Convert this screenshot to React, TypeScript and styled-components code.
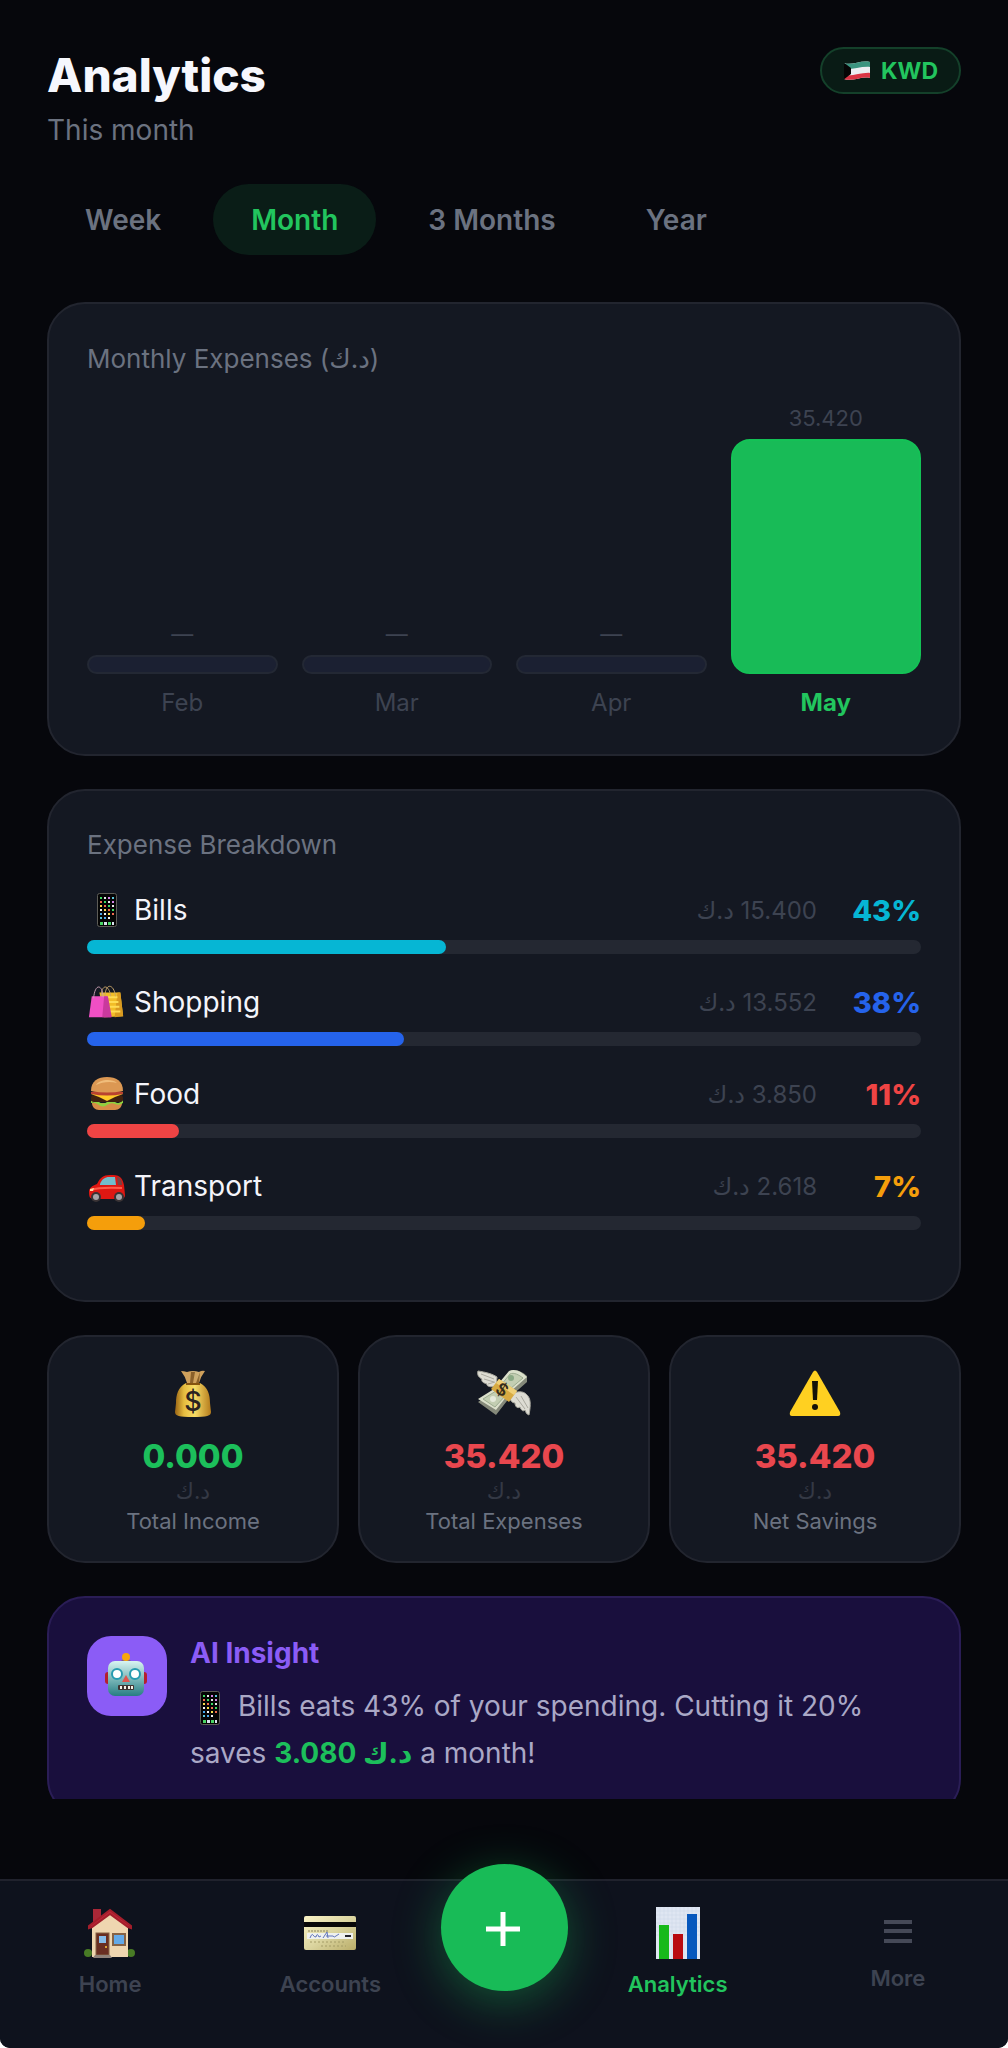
import React, { useState } from 'react'
import styled, { createGlobalStyle } from 'styled-components'

const CURRENCY = 'د.ك'

const periods = ['Week', 'Month', '3 Months', 'Year']

const months = [
  { name: 'Feb', value: 0 },
  { name: 'Mar', value: 0 },
  { name: 'Apr', value: 0 },
  { name: 'May', value: 35.42 },
]

const categories = [
  { name: 'Bills', icon: <PhoneIcon />, amount: '15.400', percent: 43, color: '#06b6d4' },
  { name: 'Shopping', icon: <BagsIcon />, amount: '13.552', percent: 38, color: '#2563eb' },
  { name: 'Food', icon: <BurgerIcon />, amount: '3.850', percent: 11, color: '#ef4444' },
  { name: 'Transport', icon: <CarIcon />, amount: '2.618', percent: 7, color: '#f59e0b' },
]

const totals = [
  { label: 'Total Income', icon: <MoneyBagIcon />, value: '0.000', color: '#1cbf5b' },
  { label: 'Total Expenses', icon: <FlyingMoneyIcon />, value: '35.420', color: '#e9474e' },
  { label: 'Net Savings', icon: <WarningIcon />, value: '35.420', color: '#e9474e' },
]

export default function App(): React.JSX.Element {
  const [period, setPeriod] = useState<string>('Month')
  const max = Math.max(...months.map((m) => m.value))

  return (
    <Screen>
      <GlobalStyle />
      <Content>
        <Header>
          <div>
            <Title>Analytics</Title>
            <Subtitle>This month</Subtitle>
          </div>
          <CurrencyButton type="button">
            <FlagIcon />
            KWD
          </CurrencyButton>
        </Header>

        <Periods>
          {periods.map((p) => (
            <PeriodButton key={p} type="button" $active={p === period} onClick={() => setPeriod(p)}>
              {p}
            </PeriodButton>
          ))}
        </Periods>

        <Stack>
          <Card>
            <ChartTitle>Monthly Expenses ({CURRENCY})</ChartTitle>
            <Chart>
              {months.map((m) => (
                <Column key={m.name}>
                  <ColumnValue>{m.value ? m.value.toFixed(3) : '—'}</ColumnValue>
                  <Bar $active={m.value > 0} style={{ height: Math.round((m.value / max) * 235) }} />
                  <ColumnLabel $active={m.value > 0}>{m.name}</ColumnLabel>
                </Column>
              ))}
            </Chart>
          </Card>

          <Card>
            <CardTitle>Expense Breakdown</CardTitle>
            <CategoryList>
              {categories.map((c) => (
                <li key={c.name}>
                  <CategoryRow>
                    {c.icon}
                    <CategoryName>{c.name}</CategoryName>
                    <Amount>
                      <bdi>{CURRENCY}</bdi> {c.amount}
                    </Amount>
                    <Percent $color={c.color}>{c.percent}%</Percent>
                  </CategoryRow>
                  <Track>
                    <Fill $color={c.color} style={{ width: `${c.percent}%` }} />
                  </Track>
                </li>
              ))}
            </CategoryList>
          </Card>

          <Totals>
            {totals.map((t) => (
              <TotalCard key={t.label}>
                {t.icon}
                <TotalValue $color={t.color}>{t.value}</TotalValue>
                <TotalCurrency>{CURRENCY}</TotalCurrency>
                <TotalLabel>{t.label}</TotalLabel>
              </TotalCard>
            ))}
          </Totals>

          <Insight>
            <InsightBadge>
              <RobotIcon />
            </InsightBadge>
            <div>
              <InsightTitle>AI Insight</InsightTitle>
              <InsightText>
                <InlineIcon>
                  <PhoneIcon />
                </InlineIcon>{' '}
                Bills eats 43% of your spending. Cutting it 20% saves{' '}
                <strong>
                  3.080 <bdi>{CURRENCY}</bdi>
                </strong>{' '}
                a month!
              </InsightText>
            </div>
          </Insight>
        </Stack>
      </Content>

      <Footer>
        <Nav>
          <NavLink href="#home">
            <HouseIcon />
            Home
          </NavLink>
          <NavLink href="#accounts">
            <CreditCardIcon />
            Accounts
          </NavLink>
          <AddButton type="button" aria-label="Add transaction">
            <svg width="36" height="36" viewBox="0 0 36 36" stroke="#fff" strokeWidth="5">
              <path d="M17 2v34M0 19h34" />
            </svg>
          </AddButton>
          <NavLink href="#analytics" $active>
            <ChartIcon />
            Analytics
          </NavLink>
          <NavLink href="#more">
            <MenuIcon />
            More
          </NavLink>
        </Nav>
      </Footer>
    </Screen>
  )
}

function FlagIcon() {
  return (
    <svg width="28" height="20" viewBox="0 0 28 20">
      <defs>
        <clipPath id="flag">
          <path d="M1 2C9 5 17-1 27 1v16c-9-2-17 4-26 1z" />
        </clipPath>
      </defs>
      <g clipPath="url(#flag)">
        <path d="M0 0h28v20H0z" fill="#eceef2" />
        <path d="M0 0h28v6C18 5 10 9 0 8z" fill="#3a947f" />
        <path d="M0 14c10 2 18-3 28-2v8H0z" fill="#dc3545" />
        <path d="M0 1l8 6v6l-8 6z" fill="#050505" />
      </g>
    </svg>
  )
}

const appColors = ['#3ddc62', '#f4f4f4', '#d583e8', '#f26d50', '#49a8ee', '#e8e8e8', '#f7df4a', '#5cc9de']

function PhoneIcon() {
  return (
    <svg width="40" height="36" viewBox="0 0 40 36">
      <rect x="10.5" y="1.5" width="19" height="33" rx="2" fill="#050505" stroke="#5d5c57" />
      {[0, 1, 2, 3, 4, 5].map((row) =>
        [0, 1, 2, 3].map((col) =>
          row === 5 && col === 3 ? null : (
            <rect
              key={`${row}-${col}`}
              x={13 + col * 4}
              y={5 + row * 4}
              width="2"
              height="2"
              fill={appColors[(row * 3 + col * 5) % 8]}
            />
          )
        )
      )}
      <path d="M13 30h3v3h-3zM21 30h3v3h-3z" fill="#48d665" />
      <path d="M17 30h3v3h-3zM25 30h2v3h-2z" fill="#d9e3ee" />
    </svg>
  )
}

function BagsIcon() {
  return (
    <svg width="40" height="36" viewBox="0 0 42 36">
      <path d="M13 8h22l3 25-20 1z" fill="#f2bd27" />
      <path d="M32 8h3l3 25-9 1z" fill="#d99a20" />
      <path d="M15 13h17M16 18h17M17 23h17M18 28h17" stroke="#ffdc55" strokeWidth="2" />
      <path d="M19 12c0-14 9-14 11 0M15 12c0-13 8-13 10 0" fill="none" stroke="#c9a56a" />
      <path d="M5 12h16l4 22H2z" fill="#f04fc4" />
      <path d="M18 12h4l4 22h-10z" fill="#c9399d" />
      <path d="M7 14c1-15 9-16 10-1" fill="none" stroke="#c99fb4" />
    </svg>
  )
}

function BurgerIcon() {
  return (
    <svg width="40" height="36" viewBox="0 0 40 36">
      <path d="M5 27h30c0 4-3 7-7 7H12c-4 0-7-3-7-7z" fill="#d78c46" />
      <path d="M4 25q4-2 8 1t8 0 8 0 8-2v3q-4 3-8 1t-8 1-8 0-8-2z" fill="#8ed13f" />
      <rect x="4" y="19" width="32" height="7" rx="3" fill="#40210f" />
      <path d="M4 18h32l-8 3-8 4-8-4z" fill="#ffc928" />
      <path d="M4 16c8-2 24-2 32 0v2q-16 3-32 0z" fill="#b94230" />
      <path d="M4 15C4 5 11 1 20 1s16 4 16 14q-16 3-32 0z" fill="#dc9853" />
      <path d="M9 9c3-5 15-7 21-2-7-2-15-1-21 2z" fill="#f0bd7b" />
    </svg>
  )
}

function CarIcon() {
  return (
    <svg width="40" height="36" viewBox="0 0 40 36">
      <path d="M2 24c0-4 3-6 8-8 3-6 6-9 13-9 9 0 12 1 14 10l1 10c0 3-2 4-5 4H7c-4 0-5-2-5-7z" fill="#df1712" />
      <path d="M13 16c2-5 5-7 9-7h6l1 8H13z" fill="#72bdcc" />
      <path d="M30 9c3 0 5 3 5 8h-4z" fill="#7c4142" />
      <path d="M4 22q8-3 31-2" fill="none" stroke="#ff5a48" strokeWidth="2" />
      <path d="M3 21l4-1-1 3H3z" fill="#ffd7a4" />
      <circle cx="9" cy="29" r="5" fill="#3a3335" />
      <circle cx="9" cy="29" r="3" fill="#a7a4a8" />
      <circle cx="32" cy="29" r="5" fill="#3a3335" />
      <circle cx="32" cy="29" r="3" fill="#a7a4a8" />
    </svg>
  )
}

function MoneyBagIcon() {
  return (
    <svg width="52" height="52" viewBox="0 0 52 52">
      <defs>
        <linearGradient id="bag" x2="1">
          <stop stopColor="#9a6414" />
          <stop offset=".25" stopColor="#e6bc3f" />
          <stop offset=".55" stopColor="#f8dc66" />
          <stop offset="1" stopColor="#b47b1c" />
        </linearGradient>
      </defs>
      <path d="M14 3q3 0 6 1 6-2 12 0 3-2 6-1-4 5-6 12H20Q18 8 14 3z" fill="#cfa05b" />
      <path d="M24 4l-1 11h3l2-11zM33 4l-4 11h3z" fill="#8b602a" />
      <path d="M19 15h14c8 4 10 12 10 20l1 9c0 4-4 5-18 5S8 48 8 44l1-9c0-8 2-16 10-20z" fill="url(#bag)" />
      <path d="M19 16h14" stroke="#85530f" strokeWidth="2" />
      <text x="26" y="43" textAnchor="middle" fontFamily="Inter, sans-serif" fontWeight="500" fontSize="27" fill="#2b2320">
        $
      </text>
    </svg>
  )
}

function FlyingMoneyIcon() {
  return (
    <svg width="56" height="52" viewBox="0 0 56 52">
      <path
        d="M20 18C15 20 10 18 11 16c-4-1-6-3-5-5-4-2-5-5-4-8 7 1 15 3 19 6z"
        fill="#dddcd3"
        stroke="#aaa99f"
      />
      <path d="M5 6l13 5M8 11l10 3M12 16l7-2" stroke="#aaa99f" />
      <path d="M36 26c5-3 11-3 14 0 5 4 5 10 3 21-3-1-3-3-4-5-2 2-4 0-5-3-3 2-5-1-5-4-3 0-5-3-5-5z" fill="#dddcd3" stroke="#aaa99f" />
      <path d="M40 29l9 12M45 28l7 12" stroke="#aaa99f" />
      <path d="M2 34l17-11L34 3c5-3 13 1 17 5v6L34 29 20 47z" fill="#85897a" />
      <path d="M2 31l16-10L33 3c6-3 13 1 18 6L34 24 20 42z" fill="#dbe0cb" />
      <path d="M7 31l13-8 10 4-11 12zM25 17L34 6c4-2 9 1 13 4L34 21z" fill="#c3ceb2" stroke="#9dac90" />
      <circle cx="35" cy="10" r="3" fill="#8ba985" />
      <circle cx="17" cy="31" r="3" fill="#e5eadb" />
      <path d="M19 16l4-5 18 12-8 11-18-13z" fill="#d7aa42" />
      <path d="M23 11l18 12-3 4-18-12z" fill="#efd078" />
      <text x="26" y="28" textAnchor="middle" fontFamily="Inter, sans-serif" fontWeight="600" fontSize="17" fill="#342c1c" transform="rotate(32 27 22)">
        $
      </text>
    </svg>
  )
}

function WarningIcon() {
  return (
    <svg width="56" height="52" viewBox="0 0 56 52">
      <path d="M26 4q2-3 4 0l23 40q1 4-2 4H5q-3 0-2-4z" fill="#ffd021" />
      <path d="M25 13h6l-1 19h-4z" fill="#141208" />
      <circle cx="28" cy="39" r="3" fill="#141208" />
    </svg>
  )
}

function RobotIcon() {
  return (
    <svg width="46" height="46" viewBox="1 1 46 46">
      <defs>
        <linearGradient id="robot" x2="0" y2="1">
          <stop stopColor="#d8f4f1" />
          <stop offset=".5" stopColor="#7eb9bb" />
          <stop offset="1" stopColor="#277d83" />
        </linearGradient>
      </defs>
      <rect x="2" y="20" width="6" height="12" rx="3" fill="#b51f2e" />
      <rect x="38" y="20" width="6" height="12" rx="3" fill="#b51f2e" />
      <path d="M18 10q0-3 5-3t5 3z" fill="#7c5d91" />
      <circle cx="23" cy="5" r="4" fill="#f7a60d" />
      <rect x="5" y="9" width="36" height="35" rx="7" fill="url(#robot)" />
      <circle cx="14" cy="22" r="5" fill="#fff" stroke="#269bb0" strokeWidth="2" />
      <circle cx="32" cy="22" r="5" fill="#fff" stroke="#269bb0" strokeWidth="2" />
      <path d="M23 23l4 7h-8z" fill="#df554e" />
      <rect x="15" y="33" width="16" height="5" rx="1" fill="#3f3431" />
      <path d="M17 34h2v3h-2zM21 34h2v3h-2zM25 34h2v3h-2zM28 34h2v3h-2z" fill="#f4f1e6" />
    </svg>
  )
}

function HouseIcon() {
  return (
    <svg width="52" height="52" viewBox="0 0 52 52">
      <path d="M9 2h8v14H9z" fill="#a92737" />
      <path d="M8 18L26 5l18 13v32H8z" fill="#efd6b0" />
      <path d="M5 21v-2L26 3l21 16v2l-3-1L26 7 8 20z" fill="#bd2637" stroke="#a31e2b" strokeWidth="2" />
      <circle cx="4" cy="46" r="4" fill="#487b25" />
      <circle cx="47" cy="46" r="4" fill="#487b25" />
      <path d="M8 40h36v10H8z" fill="#efd6b0" />
      <rect x="12" y="26" width="13" height="22" fill="#692e22" stroke="#856245" />
      <rect x="15" y="29" width="7" height="7" fill="#87bce9" />
      <circle cx="22" cy="40" r="1" fill="#ffc93b" />
      <rect x="29" y="27" width="12" height="11" fill="#63a9e8" stroke="#856245" strokeWidth="2" />
      <path d="M11 48h15l2 3H9z" fill="#8f827a" />
    </svg>
  )
}

function CreditCardIcon() {
  return (
    <svg width="52" height="52" viewBox="0 0 52 52">
      <defs>
        <linearGradient id="card" x2="1" y2="1">
          <stop stopColor="#faf3c6" />
          <stop offset=".5" stopColor="#dcd6a1" />
          <stop offset="1" stopColor="#b9ac68" />
        </linearGradient>
      </defs>
      <rect x="0" y="9" width="52" height="34" rx="2" fill="url(#card)" />
      <path d="M0 15h52v5H0z" fill="#080808" />
      <path d="M4 24h21" stroke="#8b845c" strokeDasharray="2 1" />
      <path d="M3 26h46v6H3z" fill="#eef0ee" />
      <path
        d="M6 31q2-5 3-3t3 2q1-5 3 0l2-1M19 31l4-6 1 6M22 29h4l3 0q1 2 3 0l3-2M41 29h6"
        fill="none"
        stroke="#6174ba"
      />
      <path d="M41 29h6" stroke="#23232b" strokeWidth="2" />
      <path d="M6 35h34M17 39h25" stroke="#a49c66" strokeDasharray="2 2" />
    </svg>
  )
}

function ChartIcon() {
  return (
    <svg width="52" height="52" viewBox="0 0 52 52">
      <path d="M4 0h44v52H4z" fill="#dfe6f2" />
      <path
        d="M4 4h44M4 8h44M4 12h44M4 16h44M4 20h44M4 24h44M4 28h44M8 0v52M12 0v52M16 0v52M20 0v52M24 0v52M28 0v52M32 0v52M36 0v52M40 0v52M44 0v52"
        stroke="#cbd5e5"
        strokeWidth=".5"
      />
      <path d="M7 18h10v34H7z" fill="#17b91a" />
      <path d="M21 27h10v25H21z" fill="#b90a10" />
      <path d="M35 7h10v45H35z" fill="#0758bd" />
    </svg>
  )
}

function MenuIcon() {
  return (
    <svg width="28" height="46" viewBox="0 0 28 46" stroke="#454957" strokeWidth="4">
      <path d="M0 15h28M0 24h28M0 34h28" />
    </svg>
  )
}

const GlobalStyle = createGlobalStyle`
  * {
    box-sizing: border-box;
  }
  body {
    margin: 0;
    background: #fff;
    font-family: Inter, 'DejaVu Sans', sans-serif;
  }
  button {
    font-family: inherit;
    cursor: pointer;
  }
  svg {
    display: block;
    flex-shrink: 0;
  }
`

const Screen = styled.div`
  display: flex;
  flex-direction: column;
  height: 100vh;
  background: #06070c;
  border-radius: 0 0 10px 10px;
  overflow: hidden;
`

const Content = styled.main`
  flex: 1;
  min-height: 0;
  padding: 47px 47px 0;
  overflow-y: auto;
  scrollbar-width: none;
`

const Header = styled.header`
  display: flex;
  justify-content: space-between;
  align-items: flex-start;
`

const Title = styled.h1`
  margin: 0;
  font-size: 46px;
  line-height: 57px;
  font-weight: 800;
  color: #f6f7fd;
`

const Subtitle = styled.p`
  margin: 8px 0 0;
  font-size: 28px;
  line-height: 36px;
  color: #6b7280;
`

const CurrencyButton = styled.button`
  display: flex;
  align-items: center;
  gap: 10px;
  height: 47px;
  padding: 0 21px;
  border: 2px solid #14402a;
  border-radius: 24px;
  background: #091b15;
  color: #22c55e;
  font-size: 23px;
  font-weight: 700;
`

const Periods = styled.div`
  display: flex;
  gap: 14px;
  margin: 36px 0 47px;
`

const PeriodButton = styled.button<{ $active: boolean }>`
  height: 71px;
  padding: 0 38px;
  border: 0;
  border-radius: 36px;
  background: ${({ $active }) => ($active ? '#0a1d17' : 'transparent')};
  color: ${({ $active }) => ($active ? '#22c55e' : '#6b7280')};
  font-size: 28px;
  font-weight: 600;
`

const Stack = styled.div`
  display: flex;
  flex-direction: column;
  gap: 33px;
`

const Card = styled.section`
  padding: 38px;
  border: 2px solid #22252f;
  border-radius: 38px;
  background: #141822;
`

const CardTitle = styled.h2`
  margin: 0 0 29px;
  font-size: 26px;
  line-height: 32px;
  font-weight: 400;
  color: #6b7280;
`

const ChartTitle = styled(CardTitle)`
  margin-bottom: 30px;
  line-height: 34px;
`

const Chart = styled.div`
  display: flex;
  align-items: flex-end;
  gap: 24px;
`

const Column = styled.div`
  flex: 1;
  display: flex;
  flex-direction: column;
  text-align: center;
`

const ColumnValue = styled.span`
  margin-bottom: 9px;
  font-size: 22px;
  line-height: 24px;
  color: #3d4351;
`

const Bar = styled.div<{ $active: boolean }>`
  min-height: 19px;
  border: 2px solid ${({ $active }) => ($active ? '#14c156' : '#232834')};
  border-radius: 19px;
  background: ${({ $active }) => ($active ? '#18bb57' : '#1b2032')};
`

const ColumnLabel = styled.span<{ $active: boolean }>`
  margin-top: 16px;
  font-size: 24px;
  line-height: 26px;
  font-weight: ${({ $active }) => ($active ? 700 : 400)};
  color: ${({ $active }) => ($active ? '#22c55e' : '#3d4351')};
`

const CategoryList = styled.ul`
  margin: 0;
  padding: 0 0 4px;
  list-style: none;
`

const CategoryRow = styled.div`
  display: flex;
  align-items: center;
  height: 40px;
  margin-bottom: 10px;
`

const CategoryName = styled.span`
  flex: 1;
  margin-left: 7px;
  font-size: 28px;
  color: #f4f5fb;
`

const Amount = styled.span`
  font-size: 24px;
  color: #3d4351;
`

const Percent = styled.span<{ $color: string }>`
  min-width: 104px;
  font-size: 29px;
  font-weight: 800;
  text-align: right;
  color: ${({ $color }) => $color};
`

const Track = styled.div`
  height: 14px;
  margin-bottom: 28px;
  border-radius: 7px;
  background: #242832;
`

const Fill = styled.div<{ $color: string }>`
  height: 100%;
  border-radius: 7px;
  background: ${({ $color }) => $color};
`

const Totals = styled.div`
  display: grid;
  grid-template-columns: repeat(3, 1fr);
  gap: 19px;
`

const TotalCard = styled(Card)`
  display: flex;
  flex-direction: column;
  align-items: center;
  padding: 31px 12px 26px;
`

const TotalValue = styled.span<{ $color: string }>`
  margin-top: 16px;
  font-size: 33px;
  line-height: 40px;
  font-weight: 800;
  color: ${({ $color }) => $color};
`

const TotalCurrency = styled.span`
  font-size: 22px;
  line-height: 31px;
  color: #343945;
`

const TotalLabel = styled.span`
  font-size: 22px;
  line-height: 28px;
  color: #6b7280;
`

const Insight = styled(Card)`
  display: flex;
  gap: 23px;
  border-color: #2a1d56;
  background: #190f3d;
`

const InsightBadge = styled.div`
  display: grid;
  place-items: center;
  flex-shrink: 0;
  width: 80px;
  height: 80px;
  border-radius: 24px;
  background: #8b5cf6;
`

const InsightTitle = styled.h2`
  margin: 0 0 13px;
  font-size: 28px;
  line-height: 34px;
  font-weight: 700;
  color: #8b5cf6;
`

const InsightText = styled.p`
  margin: 0;
  font-size: 28px;
  line-height: 47px;
  color: #aaa8c6;

  strong {
    font-weight: 700;
    color: #1cbf5b;
  }
`

const InlineIcon = styled.span`
  display: inline-block;
  vertical-align: middle;
`

const Footer = styled.footer`
  padding-top: 80px;
`

const Nav = styled.nav`
  display: flex;
  align-items: flex-start;
  height: 169px;
  padding-top: 26px;
  border-top: 2px solid #20222d;
  background: #0e121d;
`

const NavLink = styled.a<{ $active?: boolean }>`
  flex: 1;
  display: flex;
  flex-direction: column;
  align-items: center;
  gap: 11px;
  font-size: 22px;
  line-height: 28px;
  font-weight: 600;
  text-decoration: none;
  color: ${({ $active }) => ($active ? '#22c55e' : '#3d4351')};
`

const AddButton = styled.button`
  display: grid;
  place-items: center;
  width: 127px;
  height: 127px;
  margin-top: -43px;
  padding: 0;
  border: 0;
  border-radius: 50%;
  background: #18bb57;
  box-shadow: 0 10px 48px rgba(24, 187, 87, 0.4);
`
